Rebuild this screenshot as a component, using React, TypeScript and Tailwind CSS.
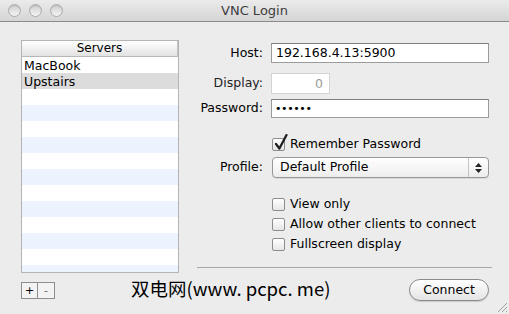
import React from 'react';

const font = { fontFamily: '"DejaVu Sans", "Liberation Sans", sans-serif' };

function Checkbox({ checked = false }: { checked?: boolean }) {
  return (
    <span className="relative inline-block w-[13px] h-[13px] rounded-[2px] border border-[#8d8d8d] bg-gradient-to-b from-white to-[#e6e6e6] shrink-0">
      {checked && (
        <svg className="absolute -top-[5px] left-[1px]" width="14" height="17" viewBox="0 0 14 17">
          <path d="M2 10 L5.4 14.5 L12.5 1" fill="none" stroke="#222" strokeWidth="2.3" strokeLinecap="round" strokeLinejoin="round" />
        </svg>
      )}
    </span>
  );
}

function TrafficLight() {
  return (
    <span className="w-[13px] h-[13px] rounded-full border border-[#adadad] bg-gradient-to-b from-[#cfcfcf] to-[#f4f4f4] shadow-[inset_0_1px_1px_rgba(0,0,0,0.12)]" />
  );
}

export default function App() {
  const rows = Array.from({ length: 14 });
  const servers = ['MacBook', 'Upstairs'];

  return (
    <div className="relative w-[509px] h-[314px] bg-[#ececec] overflow-hidden text-black" style={font}>
      {/* Title bar */}
      <div className="relative h-[22px] bg-gradient-to-b from-[#ebebeb] to-[#d5d5d5] border-b border-[#8b8b8b] flex items-center pl-[8px] gap-[8px]">
        <TrafficLight />
        <TrafficLight />
        <TrafficLight />
        <div className="absolute inset-0 flex items-center justify-center text-[13px] text-[#3c3c3c]">VNC Login</div>
      </div>

      <div className="flex">
        {/* Servers list */}
        <div className="pl-[21px] pt-[18px] w-[197px] shrink-0">
          <div className="w-[158px] h-[233px] border border-[#b4b4b4] bg-white overflow-hidden">
            <div className="h-[16px] bg-gradient-to-b from-white to-[#e2e2e2] border-b border-[#b8b8b8] flex">
              <div className="flex-1 text-center text-[12px] leading-[15px] border-r border-[#c2c2c2]">Servers</div>
            </div>
            {rows.map((_, i) => (
              <div
                key={i}
                className={`h-[16px] text-[12.5px] leading-[17px] pl-[2px] ${
                  i === 1 ? 'bg-[#dcdcdc]' : i % 2 === 1 ? 'bg-[#edf3fe]' : 'bg-white'
                }`}
              >
                {servers[i] ?? ''}
              </div>
            ))}
          </div>
          <div className="mt-[9px] flex">
            <div className="w-[17px] h-[17px] border border-[#8e8e8e] bg-[#f3f3f3] flex items-center justify-center text-[11px] leading-none">+</div>
            <div className="w-[17px] h-[17px] border border-l-0 border-[#8e8e8e] bg-[#f3f3f3] flex items-center justify-center text-[11px] leading-none text-[#666]">-</div>
          </div>
        </div>

        {/* Form */}
        <div className="w-[295px] pt-[21px] text-[12.5px]">
          <div className="flex items-center h-[20px]">
            <div className="w-[66px] text-right">Host:</div>
            <div className="ml-[8px] w-[218px] h-[20px] border border-[#9b9b9b] border-t-[#7f7f7f] bg-white pl-[4px] leading-[18px]">192.168.4.13:5900</div>
          </div>
          <div className="flex items-center h-[20px] mt-[10px]">
            <div className="w-[66px] text-right text-[#222]">Display:</div>
            <div className="ml-[8px] w-[59px] h-[21px] border border-[#d4d4d4] bg-white pr-[6px] text-right leading-[19px] text-[#9a9a9a]">0</div>
          </div>
          <div className="flex items-center h-[19px] mt-[6px]">
            <div className="w-[66px] text-right">Password:</div>
            <div className="ml-[8px] w-[218px] h-[19px] border border-[#9b9b9b] border-t-[#7f7f7f] bg-white pl-[3px] leading-[17px] text-[11px] tracking-[-0.4px]">••••••</div>
          </div>
          <div className="flex items-center gap-[5px] ml-[75px] mt-[19px] h-[14px]">
            <Checkbox checked />
            <span>Remember Password</span>
          </div>
          <div className="flex items-center h-[21px] mt-[6px]">
            <div className="w-[66px] text-right">Profile:</div>
            <div className="ml-[9px] w-[217px] h-[21px] rounded-[4px] border border-[#979797] bg-gradient-to-b from-white to-[#ededed] shadow-[0_1px_0_rgba(0,0,0,0.08)] flex items-center">
              <span className="flex-1 pl-[7px]">Default Profile</span>
              <span className="w-[20px] h-full border-l border-[#c4c4c4] flex flex-col items-center justify-center gap-[2px]">
                <svg width="7" height="4" viewBox="0 0 7 4"><path d="M0 4 L3.5 0 L7 4 Z" fill="#222" /></svg>
                <svg width="7" height="4" viewBox="0 0 7 4"><path d="M0 0 L3.5 4 L7 0 Z" fill="#222" /></svg>
              </span>
            </div>
          </div>
          <div className="ml-[75px] mt-[19px] flex flex-col gap-[6px]">
            <div className="flex items-center gap-[5px] h-[14px]">
              <Checkbox />
              <span>View only</span>
            </div>
            <div className="flex items-center gap-[5px] h-[14px]">
              <Checkbox />
              <span>Allow other clients to connect</span>
            </div>
            <div className="flex items-center gap-[5px] h-[14px]">
              <Checkbox />
              <span>Fullscreen display</span>
            </div>
          </div>
          <div className="mt-[16px] h-px bg-[#a9a9a9]" />
          <div className="flex justify-end mt-[11px] pr-[3px]">
            <div className="w-[80px] h-[22px] rounded-full border border-[#8a8a8a] bg-gradient-to-b from-white to-[#e4e4e4] shadow-[0_1px_1px_rgba(0,0,0,0.15)] flex items-center justify-center">
              Connect
            </div>
          </div>
        </div>
      </div>

      {/* Watermark */}
      <div
        className="absolute left-[131px] top-[276px] text-[18.5px] leading-[24px] text-black"
        style={{ fontFamily: '"Noto Sans CJK SC", "DejaVu Sans", sans-serif' }}
      >
        双电网(www. pcpc. me)
      </div>

      {/* Resize grip */}
      <svg className="absolute right-[1px] bottom-[1px]" width="12" height="12" viewBox="0 0 12 12">
        <path d="M11 2 L2 11 M11 6 L6 11 M11 10 L10 11" stroke="#a0a0a0" strokeWidth="1" />
      </svg>
    </div>
  );
}
